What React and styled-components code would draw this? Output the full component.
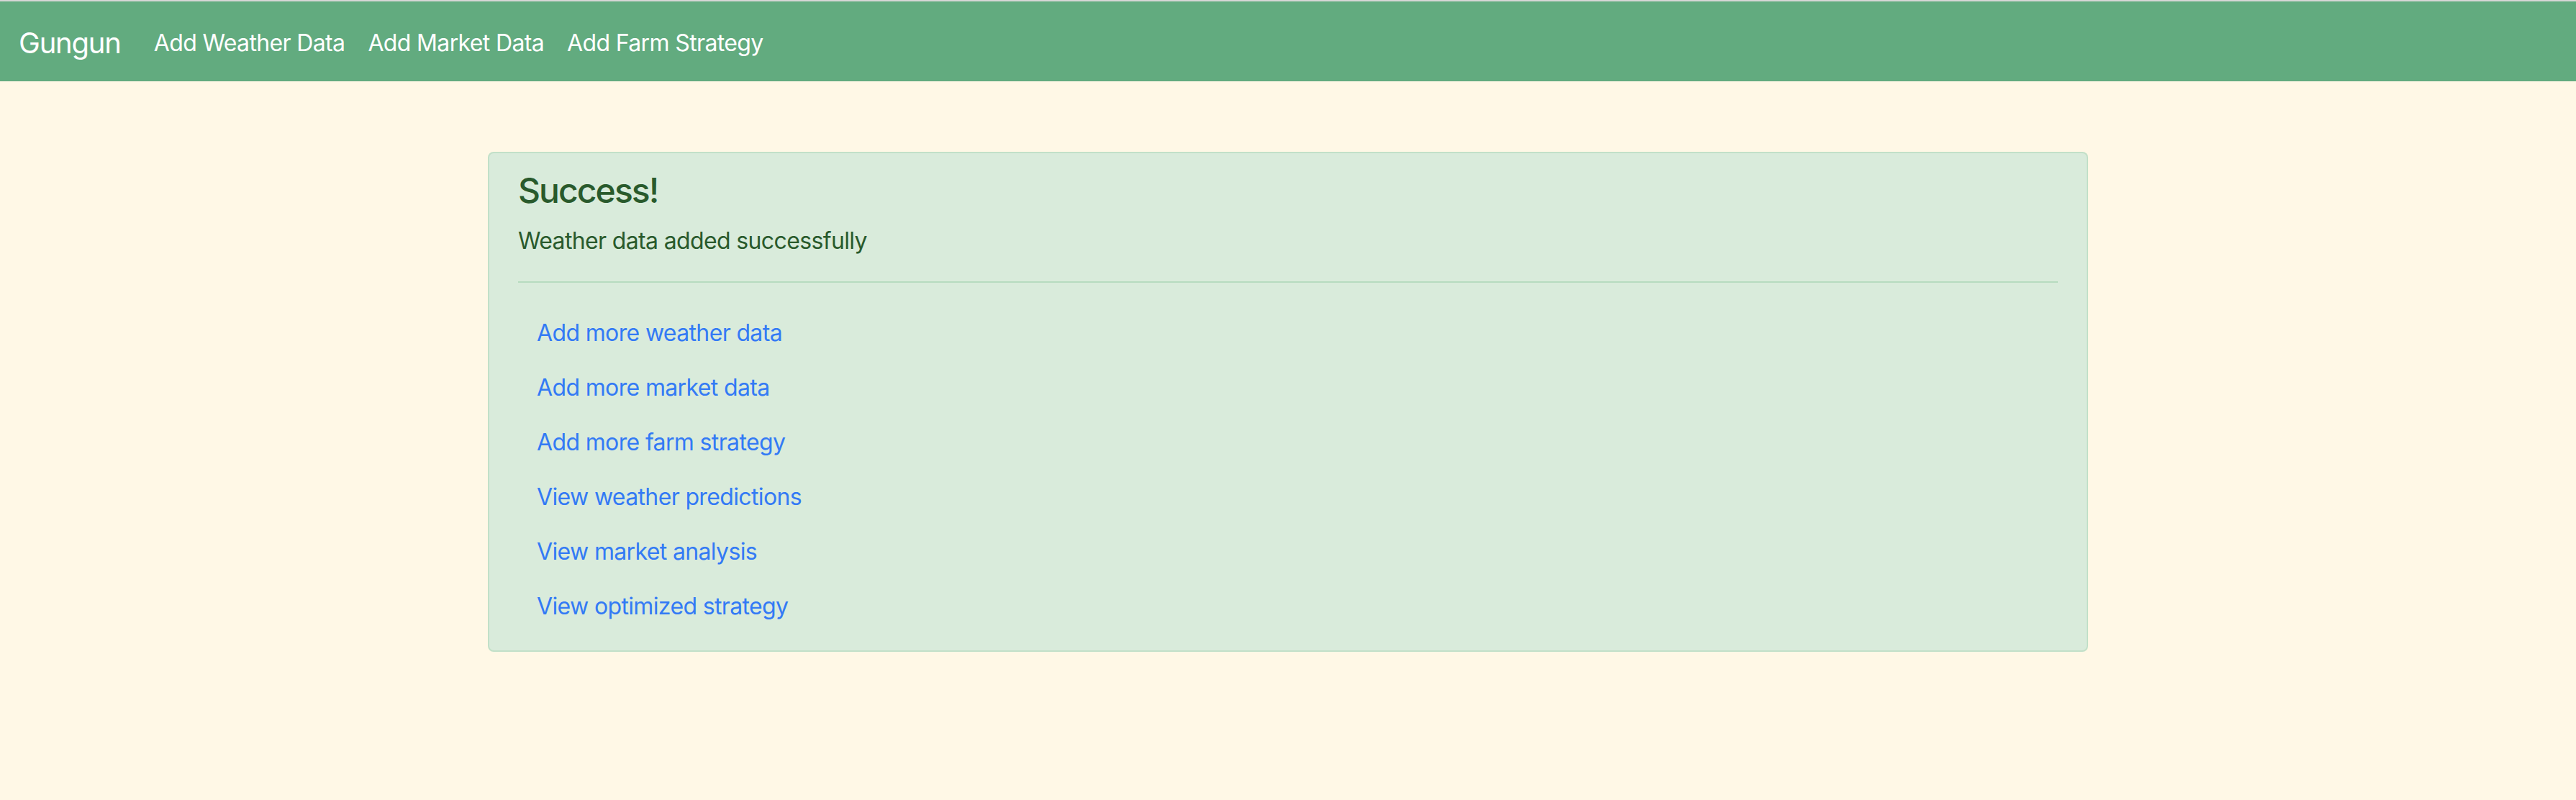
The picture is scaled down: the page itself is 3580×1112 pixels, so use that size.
import React from "react";
import styled, { createGlobalStyle } from "styled-components";

const GlobalStyle = createGlobalStyle`
  html, body {
    margin: 0;
    padding: 0;
    background: #fff8e6;
    font-family: Inter, "Noto Sans", "Liberation Sans", sans-serif;
    letter-spacing: -0.04em;
  }
  * {
    box-sizing: border-box;
  }
`;

// Navbar
const Navbar = styled.nav`
  display: flex;
  align-items: center;
  height: 113px;
  padding: 4px 24px 0 26px;
  background: #62ab7f;
  border-top: 2px solid #d6d6d6;
`;

const Brand = styled.a`
  font-size: 40px;
  line-height: 60px;
  letter-spacing: -0.03em;
  color: #ffffff;
  text-decoration: none;
  margin-right: 30px;
`;

const NavLinks = styled.div`
  display: flex;
  align-items: center;
`;

const NavLink = styled.a`
  font-size: 32px;
  line-height: 48px;
  padding: 0 16px;
  color: #ffffff;
  text-decoration: none;
`;

// Content
const Main = styled.main`
  padding-top: 98px;
`;

const Alert = styled.div`
  width: 2224px;
  margin: 0 auto;
  padding: 23px 40px;
  background: #d9ebdb;
  border: 2px solid #c2e0c8;
  border-radius: 8px;
  color: #295a2c;
`;

const Heading = styled.h4`
  margin: 0 0 17px;
  font-size: 48px;
  line-height: 1.2;
  font-weight: 500;
  letter-spacing: -0.04em;
`;

const Message = styled.p`
  margin: 0 0 32px;
  font-size: 32px;
  line-height: 48px;
`;

const Divider = styled.hr`
  margin: 0 0 32px;
  border: 0;
  border-top: 2px solid #b7dbbf;
`;

const LinkList = styled.ul`
  list-style: none;
  margin: 0;
  padding: 0;
`;

const LinkItem = styled.li`
  padding: 14px 26px;
`;

const ActionLink = styled.a`
  font-size: 32px;
  line-height: 48px;
  color: #337af5;
  text-decoration: none;
`;

const links = [
  "Add more weather data",
  "Add more market data",
  "Add more farm strategy",
  "View weather predictions",
  "View market analysis",
  "View optimized strategy",
];

export default function App() {
  return (
    <>
      <GlobalStyle />
      <Navbar>
        <Brand href="#">Gungun</Brand>
        <NavLinks>
          <NavLink href="#">Add Weather Data</NavLink>
          <NavLink href="#">Add Market Data</NavLink>
          <NavLink href="#">Add Farm Strategy</NavLink>
        </NavLinks>
      </Navbar>
      <Main>
        <Alert>
          <Heading>Success!</Heading>
          <Message>Weather data added successfully</Message>
          <Divider />
          <LinkList>
            {links.map((label) => (
              <LinkItem key={label}>
                <ActionLink href="#">{label}</ActionLink>
              </LinkItem>
            ))}
          </LinkList>
        </Alert>
      </Main>
    </>
  );
}
